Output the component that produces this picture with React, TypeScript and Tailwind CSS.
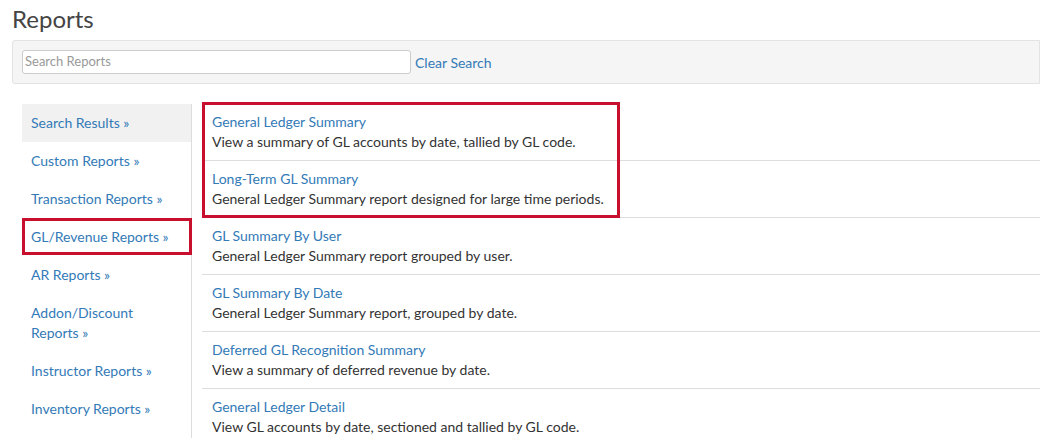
import React from "react";

const side = ["Search Results »","Custom Reports »","Transaction Reports »","GL/Revenue Reports »","AR Reports »","Addon/Discount Reports »","Instructor Reports »","Inventory Reports »"];
const rows = [
  ["General Ledger Summary","View a summary of GL accounts by date, tallied by GL code."],
  ["Long-Term GL Summary","General Ledger Summary report designed for large time periods."],
  ["GL Summary By User","General Ledger Summary report grouped by user."],
  ["GL Summary By Date","General Ledger Summary report, grouped by date."],
  ["Deferred GL Recognition Summary","View a summary of deferred revenue by date."],
  ["General Ledger Detail","View GL accounts by date, sectioned and tallied by GL code."],
];

export default function App() {
  return (
    <div className="w-[1040px] h-[438px] overflow-hidden bg-white text-[#333] text-[14px]" style={{fontFamily:"Lato, 'Open Sans', sans-serif"}}>
      <h1 className="pl-[12px] pt-[4px] text-[24px] leading-[30px] text-[#444]">Reports</h1>
      <div className="mt-[6px] ml-[12px] h-[44px] bg-[#f5f5f5] border border-[#e3e3e3] rounded-l-[3px] flex items-center pl-[9px]">
        <div className="w-[389px] h-[24px] bg-white border border-[#ccc] rounded-[3px] flex items-center px-[2px] text-[#999] text-[13px]">Search Reports</div>
        <span className="ml-[4px] text-[#337ab7] text-[14px]">Clear Search</span>
      </div>
      <div className="flex mt-[20px] ml-[22px]">
        <div className="w-[170px] border-r border-[#ddd] relative shrink-0">
          {side.map((s,i)=>(
            <div key={s} className={`px-[9px] py-[9px] leading-[20px] text-[#337ab7] ${i===0?"bg-[#f1f1f1]":""} ${i===5?"pr-[40px]":""}`}>{s}</div>
          ))}
          <div className="absolute left-0 top-[114px] w-[170px] h-[37px] border-[3px] border-[#c8102e]"></div>
        </div>
        <div className="flex-1 ml-[10px] relative">
          {rows.map(([t,d])=>(
            <div key={t} className="pl-[10px] pt-[8px] pb-[8px] border-b border-[#ddd] leading-[20px]">
              <div className="text-[#337ab7]">{t}</div>
              <div>{d}</div>
            </div>
          ))}
          <div className="absolute left-0 top-[-2px] w-[418px] h-[116px] border-[3px] border-[#c8102e]"></div>
        </div>
      </div>
    </div>
  );
}
